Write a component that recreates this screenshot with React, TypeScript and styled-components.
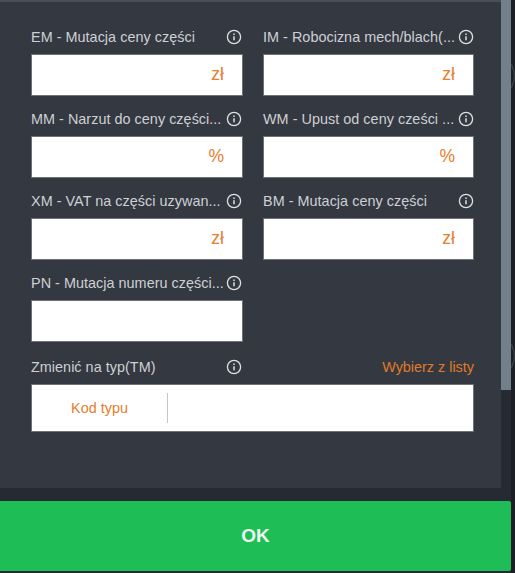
import React from "react";
import styled, { createGlobalStyle } from "styled-components";

const Global = createGlobalStyle`
  html, body { margin: 0; padding: 0; background: #1c1f26; }
  * { box-sizing: border-box; }
`;

const Page = styled.div`
  width: 515px;
  height: 573px;
  overflow: hidden;
  position: relative;
  background: #1c1f26;
  font-family: "Liberation Sans", Arial, sans-serif;
  display: flex;
  flex-direction: column;
`;

const Upper = styled.div`
  display: flex;
  height: 488px;
`;

const Panel = styled.div`
  width: 501px;
  background: #343841;
  border-top: 2px solid #4a4e57;
  padding: 27px 27px 0 31px;
  display: flex;
  flex-direction: column;
`;

const Track = styled.div`
  width: 10px;
  height: 100%;
  background: #262a33;
`;

const Thumb = styled.div`
  height: 390px;
  background: #71808a;
`;

const Ghost = styled.svg<{ $top: number }>`
  position: absolute;
  right: 0;
  top: ${(p) => p.$top}px;
  width: 4px;
  height: 26px;
  color: #3b3f47;
`;

const Grid = styled.div`
  display: grid;
  grid-template-columns: 212px 211px;
  column-gap: 20px;
  row-gap: 15px;
`;

const Field = styled.div`
  display: flex;
  flex-direction: column;
  min-width: 0;
`;

const LabelRow = styled.div`
  display: flex;
  align-items: center;
  justify-content: space-between;
  height: 16px;
  margin-bottom: 9px;
`;

const Label = styled.span`
  font-size: 14.4px;
  letter-spacing: 0.03px;
  color: #cdd0d4;
  white-space: nowrap;
`;

const Info = styled.svg<{ $flush?: boolean }>`
  flex: none;
  width: 16px;
  height: 16px;
  margin-right: ${(p) => (p.$flush ? 0 : 1)}px;
  color: #dfe1e3;
`;

const InputBox = styled.div`
  height: 42px;
  background: #fff;
  border: 1px solid #6d7178;
  display: flex;
  align-items: center;
  justify-content: flex-end;
  padding: 0 18px 2px 0;
  color: #e87d2b;
  font-size: 17.5px;
`;

const TypeHead = styled(LabelRow)`
  width: 443px;
  margin-top: 17px;
`;

const TypeTitle = styled.div`
  width: 212px;
  display: flex;
  align-items: center;
  justify-content: space-between;
`;

const PickLink = styled.a`
  font-size: 14.4px;
  color: #e07a28;
`;

const TypeBox = styled.div`
  width: 443px;
  height: 48px;
  background: #fff;
  border: 1px solid #6d7178;
  display: flex;
  align-items: center;
`;

const TypeCode = styled.div`
  width: 136px;
  height: 30px;
  border-right: 1px solid #c4c6c9;
  display: flex;
  align-items: center;
  justify-content: center;
  font-size: 14.4px;
  color: #e87d2b;
`;

const Footer = styled.div`
  background: #262a33;
  padding-top: 13px;
  width: 511px;
  height: 85px;
`;

const OkButton = styled.button`
  display: block;
  width: 511px;
  height: 70px;
  border: none;
  border-radius: 0 2px 2px 0;
  background: #1fbd55;
  color: #edf9f1;
  font-family: inherit;
  font-size: 19px;
  font-weight: 700;
  padding: 0;
`;

const InfoIcon = ({ flush }: { flush?: boolean }) => (
  <Info $flush={flush} viewBox="0 0 16 16" fill="none" stroke="currentColor">
    <circle cx="8" cy="8" r="6.6" strokeWidth="1.3" />
    <path d="M8 7.2v4" strokeWidth="1.5" />
    <path d="M8 4.4v1.5" strokeWidth="1.5" />
  </Info>
);

const fields: { label: string; unit?: string }[] = [
  { label: "EM - Mutacja ceny części", unit: "zł" },
  { label: "IM - Robocizna mech/blach(...", unit: "zł" },
  { label: "MM - Narzut do ceny części...", unit: "%" },
  { label: "WM - Upust od ceny cześci ...", unit: "%" },
  { label: "XM - VAT na części uzywan...", unit: "zł" },
  { label: "BM - Mutacja ceny części", unit: "zł" },
  { label: "PN - Mutacja numeru części..." },
];

const GhostArc = ({ top }: { top: number }) => (
  <Ghost $top={top} viewBox="0 0 4 26" fill="none" stroke="currentColor">
    <path d="M0.5 1 L3 9 C3.6 12 3.6 14 3 17 L0.5 25" strokeWidth="1.2" />
  </Ghost>
);

export default function App() {
  return (
    <Page>
      <Global />
      <Upper>
        <Panel>
          <Grid>
            {fields.map((f, i) => (
              <Field key={f.label}>
                <LabelRow>
                  <Label>{f.label}</Label>
                  <InfoIcon flush={i % 2 === 1} />
                </LabelRow>
                <InputBox>{f.unit}</InputBox>
              </Field>
            ))}
          </Grid>
          <TypeHead>
            <TypeTitle>
              <Label>Zmienić na typ(TM)</Label>
              <InfoIcon />
            </TypeTitle>
            <PickLink>Wybierz z listy</PickLink>
          </TypeHead>
          <TypeBox>
            <TypeCode>Kod typu</TypeCode>
          </TypeBox>
        </Panel>
        <Track>
          <Thumb />
        </Track>
      </Upper>
      <Footer>
        <OkButton>OK</OkButton>
      </Footer>
      <GhostArc top={63} />
      <GhostArc top={343} />
    </Page>
  );
}
